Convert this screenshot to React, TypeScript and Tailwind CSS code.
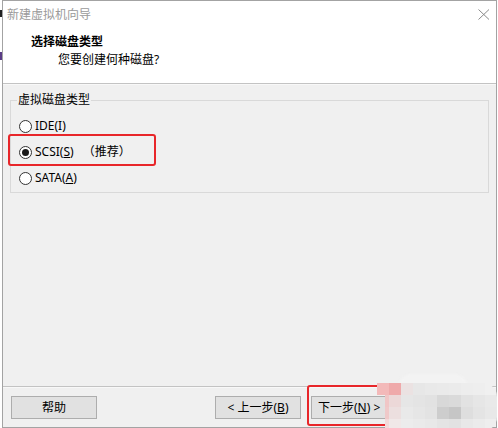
const font = "font-['Segoe_UI','Noto_Sans','Noto_Sans_CJK_SC',sans-serif]";

function Radio({ checked }: { checked?: boolean }) {
  return (
    <span className="w-[13px] h-[13px] rounded-full border border-[#333333] bg-white flex items-center justify-center shrink-0">
      {checked && <span className="w-[7px] h-[7px] rounded-full bg-[#1a1a1a]" />}
    </span>
  );
}

function Btn({ children, className = "" }: { children: React.ReactNode; className?: string }) {
  return (
    <div
      className={`w-[86px] h-[23px] border border-[#adadad] bg-[#e1e1e1] flex items-center justify-center whitespace-nowrap text-[12px] text-black ${className}`}
    >
      {children}
    </div>
  );
}

// pixel-mosaic watermark that lies over the bottom right corner
const mosaic = [
  ["#f3b9b9", "#efa9aa", "#ebe2e2", "#e7e7e7", "#e9e9e9", "#eaeaea", "#ebebeb", "#ededed", "#eeeeee", "#f0f0f0"],
  ["#f0c6c6", "#ecd8d8", "#e6e6e6", "#e4e4e4", "#e2e2e2", "#d8d8d8", "#dadada", "#e2e2e2", "#e6e6e6", "#e9e9e9"],
  ["#efc9c9", "#ecdfdf", "#e9e9e9", "#e6e6e6", "#e3e3e3", "#cdcdcd", "#c6c6c6", "#dedede", "#e4e4e4", "#e8e8e8"],
  ["#f3d9d9", "#f0e8e8", "#ececec", "#eaeaea", "#e8e8e8", "#e4e4e4", "#e2e2e2", "#e8e8e8", "#ebebeb", "#eeeeee"],
];

export default function App() {
  return (
    <div className={`relative w-[498px] h-[428px] bg-white overflow-hidden ${font}`}>
      {/* bits of the desktop behind the window */}
      <div className="absolute left-0 top-[10px] w-[2px] h-[7px] bg-[#222]" />
      <div className="absolute left-0 top-[52px] w-[2px] h-[8px] bg-[#5a3c86]" />

      <div className="ml-[2px] w-[495px] h-[428px] border border-[#a3a3a3] flex flex-col bg-[#f0f0f0]">
        {/* header */}
        <div className="h-[82px] bg-white flex flex-col">
          <div className="h-[27px] flex items-center justify-between pl-[4px] pr-[6px]">
            <span className="text-[12px] text-[#9a9a9a]">新建虚拟机向导</span>
            <svg width="12" height="11" viewBox="0 0 12 11" className="mb-[1px]">
              <path d="M0.5 0.5 L11 10.5 M11 0.5 L0.5 10.5" stroke="#8a8a8a" strokeWidth="1" fill="none" />
            </svg>
          </div>
          <div className="pl-[28px] pt-[6px] text-[12px] font-bold leading-[16px] text-black">选择磁盘类型</div>
          <div className="pl-[55px] pt-[2px] text-[12px] leading-[16px] text-black">您要创建何种磁盘?</div>
        </div>
        <div className="h-px bg-[#c3c3c3]" />
        <div className="h-px bg-[#f8f8f8]" />

        {/* body */}
        <div className="h-[301px] px-[7px] pt-[7px]">
          <fieldset className="border border-[#d9d9d9] px-[8px] pb-[1px]">
            <legend className="ml-[-2px] px-[1px] text-[12px] leading-[16px] text-black">虚拟磁盘类型</legend>
            <div className="flex flex-col pt-[5px] text-[12px] text-black">
              <div className="h-[26px] flex items-center gap-[3px]">
                <Radio />
                <span>IDE(I)</span>
              </div>
              <div className="h-[26px] flex items-center gap-[3px]">
                <Radio checked />
                <span>
                  SCSI(<span className="underline">S</span>)
                </span>
                <span className="ml-[6px]">（推荐）</span>
              </div>
              <div className="h-[26px] flex items-center gap-[3px]">
                <Radio />
                <span>
                  SATA(<span className="underline">A</span>)
                </span>
              </div>
            </div>
          </fieldset>
        </div>

        {/* footer */}
        <div className="h-px bg-[#c3c3c3]" />
        <div className="h-px bg-[#f8f8f8]" />
        <div className="flex items-center pt-[8px] pl-[8px] pr-[7px]">
          <Btn>帮助</Btn>
          <div className="ml-auto flex items-center">
            <Btn>
              &lt; 上一步(<span className="underline">B</span>)
            </Btn>
            <Btn className="ml-[10px] justify-start pl-[6px]">
              下一步(<span className="underline">N</span>) &gt;
            </Btn>
            <Btn className="ml-[6px]">取消</Btn>
          </div>
        </div>
      </div>

      {/* red highlight boxes */}
      <div className="absolute left-[8px] top-[134px] w-[148px] h-[32px] border-[2.5px] border-[#e8262a] rounded-[3px]" />
      <div className="absolute left-[307px] top-[385px] w-[120px] h-[41px] border-[2.5px] border-[#e8262a] rounded-[3px]" />

      {/* mosaic watermark */}
      <div className="absolute left-[398px] top-[374px] w-[70px] h-[14px] rounded-t-full bg-[#f3f3f3] blur-[1px]" />
      <div className="absolute left-[377px] top-[383px] grid grid-cols-[repeat(10,12px)] grid-rows-[repeat(4,12px)] rounded-tr-[14px] rounded-br-[14px] overflow-hidden blur-[0.6px]">
        {mosaic.flatMap((row, r) =>
          row.map((c, i) => (
            <div
              key={`${r}-${i}`}
              style={{
                background:
                  r > 0 && i === 0 ? `linear-gradient(to right, transparent 8px, ${c} 8px)` : c,
              }}
            />
          ))
        )}
      </div>
    </div>
  );
}
